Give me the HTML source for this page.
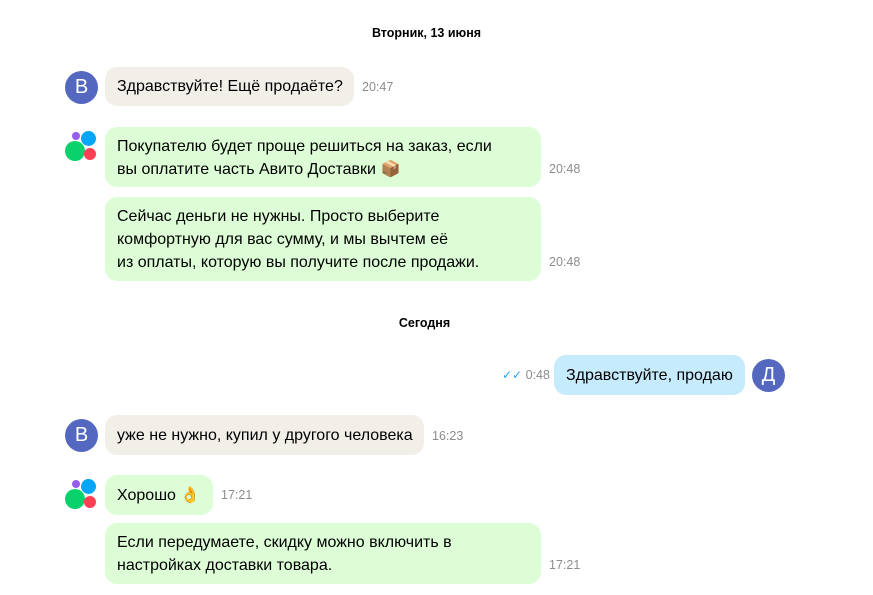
<!DOCTYPE html><html><head><meta charset="utf-8"><style>
body{margin:0;width:873px;height:595px;background:#fff;font-family:"Liberation Sans",sans-serif;position:relative;overflow:hidden;color:#000}
.a{position:absolute}
.b{position:absolute;border-radius:12px;font-size:16px;line-height:23px;padding:0 12px;box-sizing:border-box;white-space:nowrap}
.g{background:#ddfdd6}.w{background:#f2efe9}.bl{background:#c6ebfd}
.t{position:absolute;font-size:12.5px;color:#8c8c8c}
.h{position:absolute;font-size:12.5px;font-weight:bold;width:100%;text-align:center}
.av{position:absolute;width:33px;height:33px;border-radius:50%;background:#5468c0;color:#fff;font-size:20px;text-align:center;line-height:33px}
.c{position:absolute;border-radius:50%}
</style></head><body>
<div class="h" style="top:26px;left:0;width:853px">Вторник, 13 июня</div>
<div class="av" style="left:65px;top:71px">В</div>
<div class="b w" style="left:105px;top:67px;width:249px;height:39px;padding-top:8px">Здравствуйте! Ещё продаёте?</div>
<div class="t" style="left:362px;top:80px">20:47</div>
<div class="a" style="left:64px;top:130px;width:36px;height:32px">
<div class="c" style="left:8px;top:2px;width:8px;height:8px;background:#965eeb"></div>
<div class="c" style="left:17px;top:1px;width:15px;height:15px;background:#04a6f9"></div>
<div class="c" style="left:1px;top:11px;width:20px;height:20px;background:#0ad26a"></div>
<div class="c" style="left:20px;top:18px;width:12px;height:12px;background:#ff4053"></div></div>
<div class="b g" style="left:105px;top:127px;width:436px;height:60px;padding-top:8px">Покупателю будет проще решиться на заказ, если<br>вы оплатите часть Авито Доставки 📦</div>
<div class="t" style="left:549px;top:162px">20:48</div>
<div class="b g" style="left:105px;top:197px;width:436px;height:84px;padding-top:8px">Сейчас деньги не нужны. Просто выберите<br>комфортную для вас сумму, и мы вычтем её<br>из оплаты, которую вы получите после продажи.</div>
<div class="t" style="left:549px;top:255px">20:48</div>
<div class="h" style="top:316px;left:0;width:849px">Сегодня</div>
<div class="t" style="left:502px;top:368px"><span style="color:#1fa5f0;font-size:12px">✓✓</span> 0:48</div>
<div class="b bl" style="left:554px;top:355px;width:191px;height:40px;padding-top:9px">Здравствуйте, продаю</div>
<div class="av" style="left:752px;top:359px">Д</div>
<div class="av" style="left:65px;top:419px">В</div>
<div class="b w" style="left:105px;top:415px;width:319px;height:40px;padding-top:9px">уже не нужно, купил у другого человека</div>
<div class="t" style="left:432px;top:429px">16:23</div>
<div class="a" style="left:64px;top:478px;width:36px;height:32px">
<div class="c" style="left:8px;top:2px;width:8px;height:8px;background:#965eeb"></div>
<div class="c" style="left:17px;top:1px;width:15px;height:15px;background:#04a6f9"></div>
<div class="c" style="left:1px;top:11px;width:20px;height:20px;background:#0ad26a"></div>
<div class="c" style="left:20px;top:18px;width:12px;height:12px;background:#ff4053"></div></div>
<div class="b g" style="left:105px;top:475px;width:108px;height:40px;padding-top:9px">Хорошо 👌</div>
<div class="t" style="left:221px;top:488px">17:21</div>
<div class="b g" style="left:105px;top:523px;width:436px;height:61px;padding-top:8px">Если передумаете, скидку можно включить в<br>настройках доставки товара.</div>
<div class="t" style="left:549px;top:558px">17:21</div>
</body></html>
